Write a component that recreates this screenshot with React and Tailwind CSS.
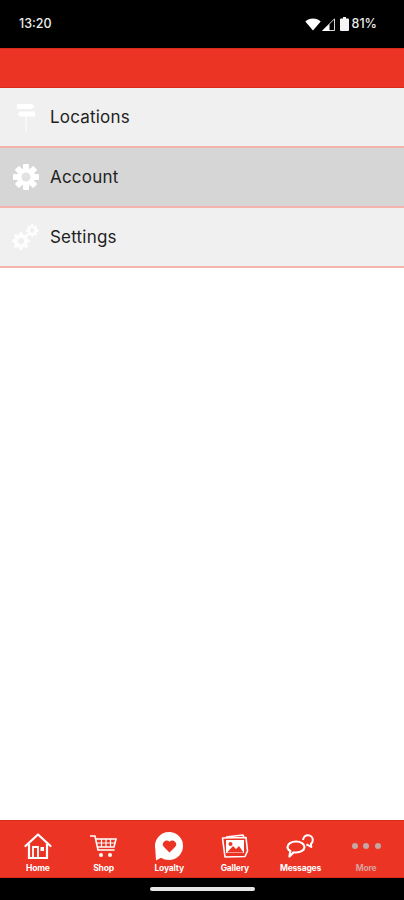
const font = { fontFamily: "Inter" };

const SignIcon = () => (
  <svg width="24" height="30" viewBox="0 0 24 30" fill="#fff">
    <path d="M3 2h15l2.500 2.500L18 7H3z" />
    <path d="M6 9.500h15v5H6l-2.500-2.500z" />
    <rect x="11.300" y="14.500" width="1.600" height="15" opacity="0.6" />
  </svg>
);

const GearIcon = () => (
  <svg width="26" height="26" viewBox="0 0 26 26">
    {[0, 45, 90, 135].map((a) => (
      <rect key={a} x="10" y="0" width="6" height="26" rx="1" fill="#fff" transform={`rotate(${a} 13 13)`} />
    ))}
    <circle cx="13" cy="13" r="9" fill="#fff" />
    <circle cx="13" cy="13" r="4.500" fill="#e2e2e2" />
  </svg>
);

const GearsIcon = () => (
  <svg width="28" height="28" viewBox="0 0 28 28" opacity="0.9">
    <g fill="#fff">
      {[0, 45, 90, 135].map((a) => (
        <rect key={a} x="7.500" y="9" width="3" height="18" rx="0.5" transform={`rotate(${a} 9 18)`} />
      ))}
      <circle cx="9" cy="18" r="7" />
      {[0, 45, 90, 135].map((a) => (
        <rect key={a} x="19" y="1" width="2.400" height="13" rx="0.5" transform={`rotate(${a} 20.200 7.500)`} />
      ))}
      <circle cx="20.200" cy="7.500" r="5" />
    </g>
    <circle cx="9" cy="18" r="3" fill="#f0f0f0" />
    <circle cx="20.200" cy="7.500" r="2.200" fill="#f0f0f0" />
  </svg>
);

const HomeIcon = () => (
  <svg width="28" height="27" viewBox="0 0 28 27" fill="none" stroke="#fff" strokeWidth="2.200">
    <path d="M1.500 13 14 1.500 26.500 13" strokeLinecap="round" strokeLinejoin="round" />
    <path d="M5 11v14h18V11" />
    <path d="M9 25V14h5v11" strokeWidth="1.800" />
    <rect x="16.500" y="14" width="3.500" height="4" fill="#fff" stroke="none" />
  </svg>
);

const CartIcon = () => (
  <svg width="27" height="23" viewBox="0 0 27 23" fill="none" stroke="#fff" strokeWidth="1.600">
    <path d="M0.500 1h4.500l3 14h16" strokeLinecap="round" strokeLinejoin="round" />
    <path d="M5.500 4h20.500l-2 8H7.500" />
    <path d="M7 8h18M11.500 4v8M16 4v8M20.500 4v8" strokeWidth="1.200" />
    <circle cx="11" cy="20" r="2" fill="#fff" stroke="none" />
    <circle cx="20" cy="20" r="2" fill="#fff" stroke="none" />
  </svg>
);

const LoyaltyIcon = () => (
  <svg width="28" height="29" viewBox="0 0 28 29">
    <path d="M14 0a14 14 0 0 1 0 28c-3 0-5.500-.7-8-2.200L1 28.500 .3 17A14 14 0 0 1 14 0z" fill="#fff" />
    <path d="M14.500 20.500 9 15a3.800 3.800 0 0 1 0-5.300 3.800 3.800 0 0 1 5.500 0 3.800 3.800 0 0 1 5.500 0 3.800 3.800 0 0 1 0 5.300z" fill="#ec3425" />
  </svg>
);

const GalleryIcon = () => (
  <svg width="28" height="24" viewBox="0 0 28 24" fill="none" stroke="#fff" strokeWidth="1.600" strokeLinejoin="round">
    <path d="M5 3 22 1l1 3" />
    <path d="M1.500 4 25 3.500 26.500 17 24 22.500 4 23z" />
    <rect x="5" y="6" width="18" height="13" fill="#fff" stroke="none" />
    <circle cx="9.500" cy="10" r="2" fill="#ec3425" stroke="none" />
    <path d="M6 18.500 12 12l3 3 3-3 4.500 6.500z" fill="#ec3425" stroke="none" />
  </svg>
);

const MessagesIcon = () => (
  <svg width="28" height="24" viewBox="0 0 28 24" fill="none" stroke="#fff" strokeWidth="2.200" strokeLinejoin="round">
    <path d="M10 7.500c4.800 0 8.500 2.500 8.500 5.500s-3.700 5.500-8.500 5.500c-.8 0-1.500 0-2.300-.2L3.500 22.500l.8-5.500C2.500 16 1.500 14.600 1.500 13c0-3 3.700-5.500 8.500-5.500z" />
    <path d="M17 6C17.500 3 19.800 1.200 22 1.200c2.700 0 4.800 2.200 4.800 4.800 0 1.600-.7 3-1.900 3.800l.4 3.200-3.800-2.200c-.4 0-.8 0-1.200-.1" strokeWidth="2" />
  </svg>
);

const DotsIcon = () => (
  <div className="flex h-[25px] items-center gap-[5.500px]">
    <span className="size-[6px] rounded-full bg-[#c4a6a4]" />
    <span className="size-[6px] rounded-full bg-[#c4a6a4]" />
    <span className="size-[6px] rounded-full bg-[#c4a6a4]" />
  </div>
);

const menu = [
  { label: "Locations", icon: <SignIcon /> },
  { label: "Account", icon: <GearIcon />, active: true },
  { label: "Settings", icon: <GearsIcon /> },
];

const tabs = [
  { label: "Home", icon: <HomeIcon /> },
  { label: "Shop", icon: <CartIcon /> },
  { label: "Loyalty", icon: <LoyaltyIcon /> },
  { label: "Gallery", icon: <GalleryIcon /> },
  { label: "Messages", icon: <MessagesIcon /> },
  { label: "More", icon: <DotsIcon />, muted: true },
];

const App = () => {
  return (
    <div className="flex h-[900px] w-[404px] flex-col overflow-hidden bg-white" style={font}>
      {/* Status bar */}
      <div className="flex h-[48px] shrink-0 items-center justify-between bg-black pl-[19px] pr-[27px] text-[12.500px] font-medium text-[#ececec]">
        <span>13:20</span>
        <div className="flex items-center">
          <svg width="16" height="13" viewBox="0 0 16 13">
            <path d="M8 12.500 0.300 3.500C2.300 1.700 5 .6 8 .6s5.700 1.100 7.700 2.900z" fill="#fff" />
          </svg>
          <svg width="13" height="13" viewBox="0 0 13 13" className="ml-[1px]">
            <path d="M12.500 .8v11.700H.8z" fill="none" stroke="#d8d8d8" strokeWidth="1" />
            <path d="M7.500 6v7H0z" fill="#fff" />
          </svg>
          <svg width="9" height="14" viewBox="0 0 9 14" className="ml-[5px]">
            <path d="M3 0h3v1.500h2a1 1 0 0 1 1 1V13a1 1 0 0 1-1 1H1a1 1 0 0 1-1-1V2.500a1 1 0 0 1 1-1h2z" fill="#f4f4f4" />
          </svg>
          <span className="ml-[3px]">81%</span>
        </div>
      </div>

      {/* Top bar */}
      <div className="h-[40px] shrink-0 border-y border-y-[#d92b1b] bg-[#ec3425]" />

      {/* Menu */}
      <div className="flex-1">
        {menu.map((item) => (
          <div
            key={item.label}
            className={`flex h-[60px] items-center border-b-2 border-b-[#f4b3ad] ${item.active ? "bg-[#d6d6d6]" : "bg-[#f0f0f0]"}`}
          >
            <div className="flex w-[51px] shrink-0 justify-center">{item.icon}</div>
            <span className="-ml-px text-[17px] font-normal leading-none tracking-[0.2px] text-[#222222]">{item.label}</span>
          </div>
        ))}
      </div>

      {/* Tab bar */}
      <div className="grid h-[58px] shrink-0 grid-cols-6 border-y border-y-[#d92b1b] bg-[#ec3425] px-[5px]">
        {tabs.map((tab) => (
          <div key={tab.label} className="flex flex-col items-center justify-end pb-[3px]">
            <div className="flex h-[30px] items-center">{tab.icon}</div>
            <span
              className={`mt-[1px] text-[8.500px] font-bold leading-[12px] tracking-[-0.2px] ${tab.muted ? "text-[#d8a29d]" : "text-white"}`}
            >
              {tab.label}
            </span>
          </div>
        ))}
      </div>

      {/* Gesture bar */}
      <div className="flex h-[22px] shrink-0 items-center justify-center bg-black pb-[1px]">
        <div className="h-[4px] w-[105px] rounded-full bg-[#e6e6e6]" />
      </div>
    </div>
  );
};

export default App;
